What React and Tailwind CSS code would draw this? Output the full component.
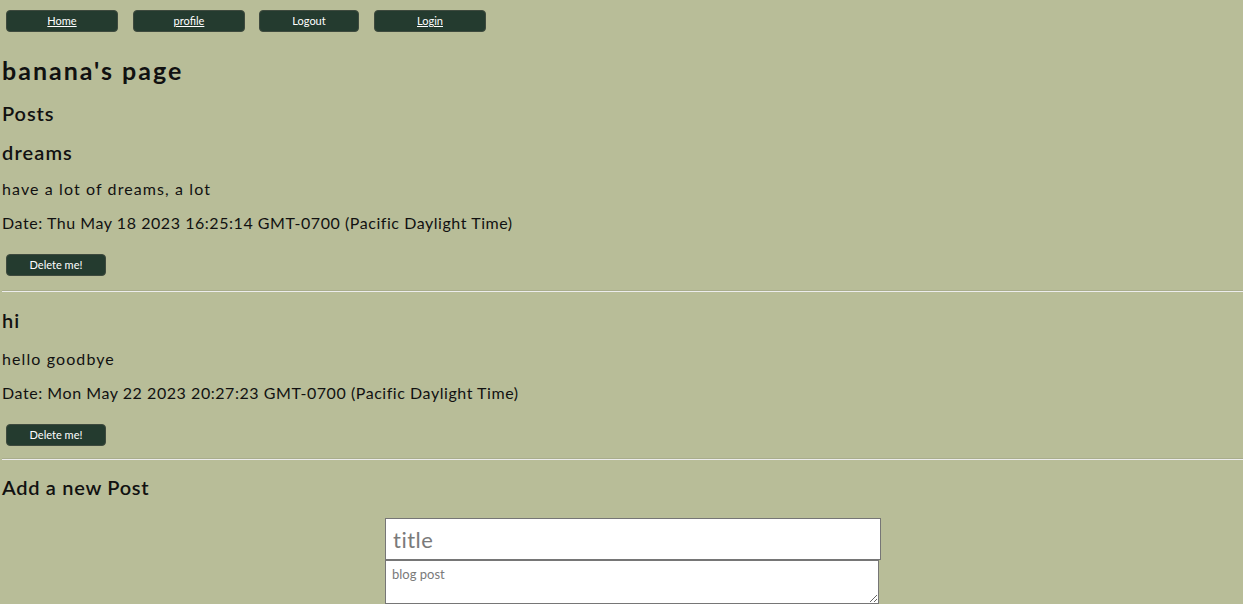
import React from "react";

const posts = [
  {
    title: "dreams",
    body: "have a lot of dreams, a lot",
    date: "Thu May 18 2023 16:25:14 GMT-0700 (Pacific Daylight Time)",
  },
  {
    title: "hi",
    body: "hello goodbye",
    date: "Mon May 22 2023 20:27:23 GMT-0700 (Pacific Daylight Time)",
  },
];

const font = { fontFamily: '"Lato", "Noto Sans", sans-serif' };

const NavButton = ({ label, width, underline = true, extra = "" }) => (
  <button
    className={`h-[22px] ${width} ${extra} rounded-[4px] bg-[#243b2f] border border-[#3e4a3e] text-[11px] text-white ${
      underline ? "underline" : ""
    }`}
  >
    {label}
  </button>
);

const App = () => {
  return (
    <div
      className="min-h-screen bg-[#b8bd98] text-[#111] overflow-hidden"
      style={font}
    >
      {/* Nav */}
      <nav className="flex items-start gap-[15px] pt-[10px] pl-[6px] h-[42px]">
        <NavButton label="Home" width="w-[112px]" />
        <NavButton label="profile" width="w-[112px]" />
        <NavButton
          label="Logout"
          width="w-[100px]"
          underline={false}
          extra="-ml-[1px]"
        />
        <NavButton label="Login" width="w-[112px]" />
      </nav>

      <h1 className="mt-[14px] h-[28px] leading-[28px] pl-[2px] text-[25px] font-bold tracking-[2px]">
        banana's page
      </h1>
      <h2 className="mt-[16px] h-[26px] leading-[26px] pl-[2px] text-[20px] font-semibold tracking-[0.9px]">
        Posts
      </h2>

      {posts.map((post, i) => (
        <div key={post.title}>
          <h3
            className={`${
              i === 0 ? "mt-[13px]" : "mt-[15px]"
            } h-[26px] leading-[26px] pl-[2px] text-[20px] font-semibold tracking-[1.1px]`}
          >
            {post.title}
          </h3>
          <p
            className={`${
              i === 0 ? "mt-[14px]" : "mt-[16px]"
            } h-[20px] leading-[20px] pl-[2px] text-[16px] tracking-[1.1px]`}
          >
            {post.body}
          </p>
          <p className="mt-[14px] h-[20px] leading-[20px] pl-[2px] text-[16px] tracking-[0.55px]">
            Date: {post.date}
          </p>
          <button className="mt-[21px] ml-[6px] block h-[22px] w-[100px] rounded-[4px] bg-[#243b2f] border border-[#3e4a3e] text-[11px] text-white">
            Delete me!
          </button>
          <hr
            className={`${
              i === 0 ? "mt-[14px]" : "mt-[12px]"
            } ml-[2px] h-[2px] border-0 border-t border-[#a9ad8c] bg-[#ececec]`}
          />
        </div>
      ))}

      <h2 className="mt-[14px] h-[26px] leading-[26px] pl-[2px] text-[20px] font-semibold tracking-[0.7px]">
        Add a new Post
      </h2>

      <form className="mt-[18px] pl-[385px] flex flex-col">
        <input
          type="text"
          placeholder="title"
          className="w-[496px] h-[42px] bg-white border border-[#767676] px-[7px] text-[22px] tracking-[0.5px] placeholder:text-[#7a7a7a] outline-none"
        />
        <textarea
          placeholder="blog post"
          className="w-[494px] h-[44px] bg-white border border-[#767676] px-[6px] py-[4px] text-[13px] placeholder:text-[#7a7a7a] outline-none"
        />
      </form>
    </div>
  );
};

export default App;
